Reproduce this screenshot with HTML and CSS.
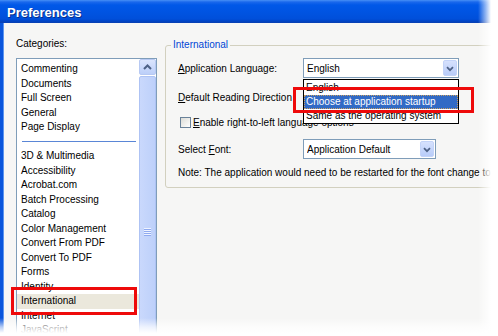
FILE: index.html
```html
<!DOCTYPE html>
<html>
<head>
<meta charset="utf-8">
<link rel="stylesheet" href="styles.css">
</head>
<body>
<div class="window">
  <div class="titlebar"><span class="title">Preferences</span></div>
  <div class="frame">
    <div class="categories">
      <div class="cat-label">Categories:</div>
      <div class="listbox">
        <ul class="items">
          <li>Commenting</li>
          <li>Documents</li>
          <li>Full Screen</li>
          <li>General</li>
          <li>Page Display</li>
          <li class="sep"></li>
          <li>3D &amp; Multimedia</li>
          <li>Accessibility</li>
          <li>Acrobat.com</li>
          <li>Batch Processing</li>
          <li>Catalog</li>
          <li>Color Management</li>
          <li>Convert From PDF</li>
          <li>Convert To PDF</li>
          <li>Forms</li>
          <li>Identity</li>
          <li class="selected">International</li>
          <li>Internet</li>
          <li>JavaScript</li>
          <li>Measuring (2D)</li>
        </ul>
        <div class="vscroll">
          <div class="sb-up"><svg width="15" height="15" viewBox="0 0 15 15"><polyline points="4,9 7.5,5.5 11,9" fill="none" stroke="#4d6185" stroke-width="2"/></svg></div>
          <div class="sb-thumb"><span class="grip"></span></div>
        </div>
      </div>
    </div>
    <div class="settings">
      <fieldset class="group">
        <legend>International</legend>
        <div class="group-body">
          <div class="row">
            <span class="lbl"><u>A</u>pplication Language:</span>
            <div class="combo combo-wide"><span class="combo-text">English</span><span class="cbtn"><svg width="14" height="17" viewBox="0 0 14 17"><polyline points="3.5,7 7,10.5 10.5,7" fill="none" stroke="#4d6185" stroke-width="2"/></svg></span></div>
          </div>
          <div class="row row-2">
            <span class="lbl"><u>D</u>efault Reading Direction</span>
            <div class="combo combo-wide"><span class="combo-text">Left to Right</span><span class="cbtn"></span></div>
          </div>
          <div class="row row-check">
            <span class="checkbox"></span>
            <span class="check-lbl"><u>E</u>nable right-to-left language options</span>
          </div>
          <div class="row row-4">
            <span class="lbl">Select <u>F</u>ont:</span>
            <div class="combo combo-font"><span class="combo-text">Application Default</span><span class="cbtn"><svg width="14" height="17" viewBox="0 0 14 17"><polyline points="3.5,7 7,10.5 10.5,7" fill="none" stroke="#4d6185" stroke-width="2"/></svg></span></div>
          </div>
          <div class="note">Note: The application would need to be restarted for the font change to take effect.</div>
        </div>
      </fieldset>
    </div>
  </div>
</div>

<div class="popup">
  <div class="popup-item">English</div>
  <div class="popup-item active">Choose at application startup</div>
  <div class="popup-item">Same as the operating system</div>
</div>

<div class="callout callout-list"></div>
<div class="callout callout-popup"></div>

<div class="fade fade-right"></div>
<div class="fade fade-bottom"></div>
</body>
</html>
```

FILE: styles.css
```css
* { box-sizing: border-box; }

html, body {
  margin: 0;
  padding: 0;
}

body {
  width: 498px;
  height: 336px;
  overflow: hidden;
  background: #ffffff;
  font-family: "Liberation Sans", Arial, sans-serif;
  font-size: 10px;
  color: #000;
}

.window {
  width: 498px;
  height: 336px;
  display: flex;
  flex-direction: column;
  background: #f6f6f5;
}

.titlebar {
  height: 23px;
  flex: none;
  display: flex;
  align-items: center;
  padding-left: 7px;
  background: linear-gradient(#4790f6 0px, #1a68ec 2px, #0058e8 5px, #0054e2 12px, #004fda 19px, #0044c6 21px, #0a3fb0 23px);
}

.title {
  color: #fff;
  font-family: "Liberation Sans", Arial, sans-serif;
  font-weight: bold;
  font-size: 13px;
  text-shadow: 1px 1px 0 #0a2f8a;
  margin-top: 1px;
}

.frame {
  flex: 1;
  display: flex;
  min-height: 0;
  border-left: 3px solid #0a55dc;
  box-shadow: inset 1px 0 0 #5d95ef;
}

.categories {
  flex: none;
  padding-left: 13px;
  padding-top: 15px;
  display: flex;
  flex-direction: column;
}

.cat-label {
  height: 12px;
  line-height: 12px;
  margin-bottom: 8px;
}

.listbox {
  width: 141px;
  height: 290px;
  border: 1px solid #7f9db9;
  background: #fff;
  display: flex;
}

.items {
  list-style: none;
  margin: 0;
  padding: 3px 0 0 0;
  width: 122px;
  flex: none;
  overflow: hidden;
}

.items li {
  height: 14.5px;
  line-height: 14.5px;
  padding-left: 4px;
  white-space: nowrap;
}

.items li.sep {
  display: flex;
  align-items: center;
  padding: 0 3px 0 5px;
}

.items li.sep::after {
  content: "";
  display: block;
  flex: 1;
  height: 1px;
  background: #5a86d6;
}

.items li.selected {
  background: #ebe8dc;
}

.vscroll {
  flex: 1;
  display: flex;
  flex-direction: column;
}

.sb-up {
  height: 16px;
  margin-bottom: 1px;
  border: 1px solid #b7c9f3;
  border-radius: 2px;
  background: linear-gradient(#dbe5fd, #bccff9);
  display: flex;
  align-items: center;
  justify-content: center;
}

.sb-thumb {
  flex: 1;
  border: 1px solid #aec3f4;
  border-radius: 2px;
  background: linear-gradient(90deg, #c9d8fc, #bdd0fa);
  position: relative;
}

.grip {
  position: absolute;
  left: 4px;
  top: 151px;
  width: 7px;
  height: 8px;
  background: repeating-linear-gradient(#eef3ff 0 1px, #8faaf0 1px 2px);
}

.settings {
  flex: none;
  margin-left: 8px;
}

.group {
  margin: 16px 0 0 0;
  padding: 0;
  width: 340px;
  border: 1px solid #d2d0bf;
  border-radius: 3px;
}

.group legend {
  margin-left: 5px;
  padding: 0 2px;
  line-height: 12px;
  height: 12px;
  color: #0046d5;
}

.group-body {
  padding: 7px 0 8px 12px;
  display: flex;
  flex-direction: column;
}

.row {
  display: flex;
  align-items: center;
  height: 20px;
}

.row-2 { margin-top: 9px; }
.row-check { margin-top: 8px; height: 14px; }
.row-4 { margin-top: 10px; }

.lbl {
  width: 125px;
  flex: none;
  white-space: nowrap;
}

.combo {
  height: 20px;
  border: 1px solid #7f9db9;
  background: #fff;
  display: flex;
  align-items: center;
  padding-left: 3px;
}

.combo-wide { width: 156px; }
.combo-font { width: 133px; }

.combo-text {
  flex: 1;
  white-space: nowrap;
  overflow: hidden;
}

.cbtn {
  width: 14px;
  height: 16px;
  margin-right: 1px;
  border: 1px solid #c3d3f8;
  border-radius: 2px;
  background: linear-gradient(#d6e1fd, #b8ccf9);
  display: flex;
  align-items: center;
  justify-content: center;
}

.cbtn svg { display: block; }

.checkbox {
  width: 11px;
  height: 11px;
  margin-left: 2px;
  border: 1px solid #6a8299;
  background: linear-gradient(135deg, #dcdcd6, #ffffff);
  flex: none;
}

.check-lbl {
  margin-left: 2px;
  white-space: nowrap;
}

.note {
  margin-top: 8px;
  height: 12px;
  line-height: 12px;
  white-space: nowrap;
}

.popup {
  position: absolute;
  left: 303px;
  top: 79px;
  width: 156px;
  height: 45px;
  border: 1px solid #000;
  background: #fff;
  padding-top: 1px;
  overflow: hidden;
}

.popup-item {
  height: 14px;
  line-height: 14px;
  padding-left: 2px;
  white-space: nowrap;
}

.popup-item.active {
  background: #316ac5;
  color: #fff;
  outline: 1px dotted #c9a060;
  outline-offset: -1px;
}

.callout {
  position: absolute;
  border: 3px solid #ee0a0a;
}

.callout-list {
  left: 11px;
  top: 287px;
  width: 126px;
  height: 28px;
}

.callout-popup {
  left: 293px;
  top: 87px;
  width: 181px;
  height: 26px;
}

.fade {
  position: absolute;
}

.fade-right {
  left: 478px;
  top: 0;
  width: 20px;
  height: 336px;
  background: linear-gradient(90deg, rgba(255,255,255,0) 0px, rgba(255,255,255,0.6) 8px, #fff 13px);
}

.fade-bottom {
  left: 0;
  top: 318px;
  width: 498px;
  height: 18px;
  background: linear-gradient(rgba(255,255,255,0) 0px, rgba(255,255,255,0.7) 9px, #fff 15px);
}
```
